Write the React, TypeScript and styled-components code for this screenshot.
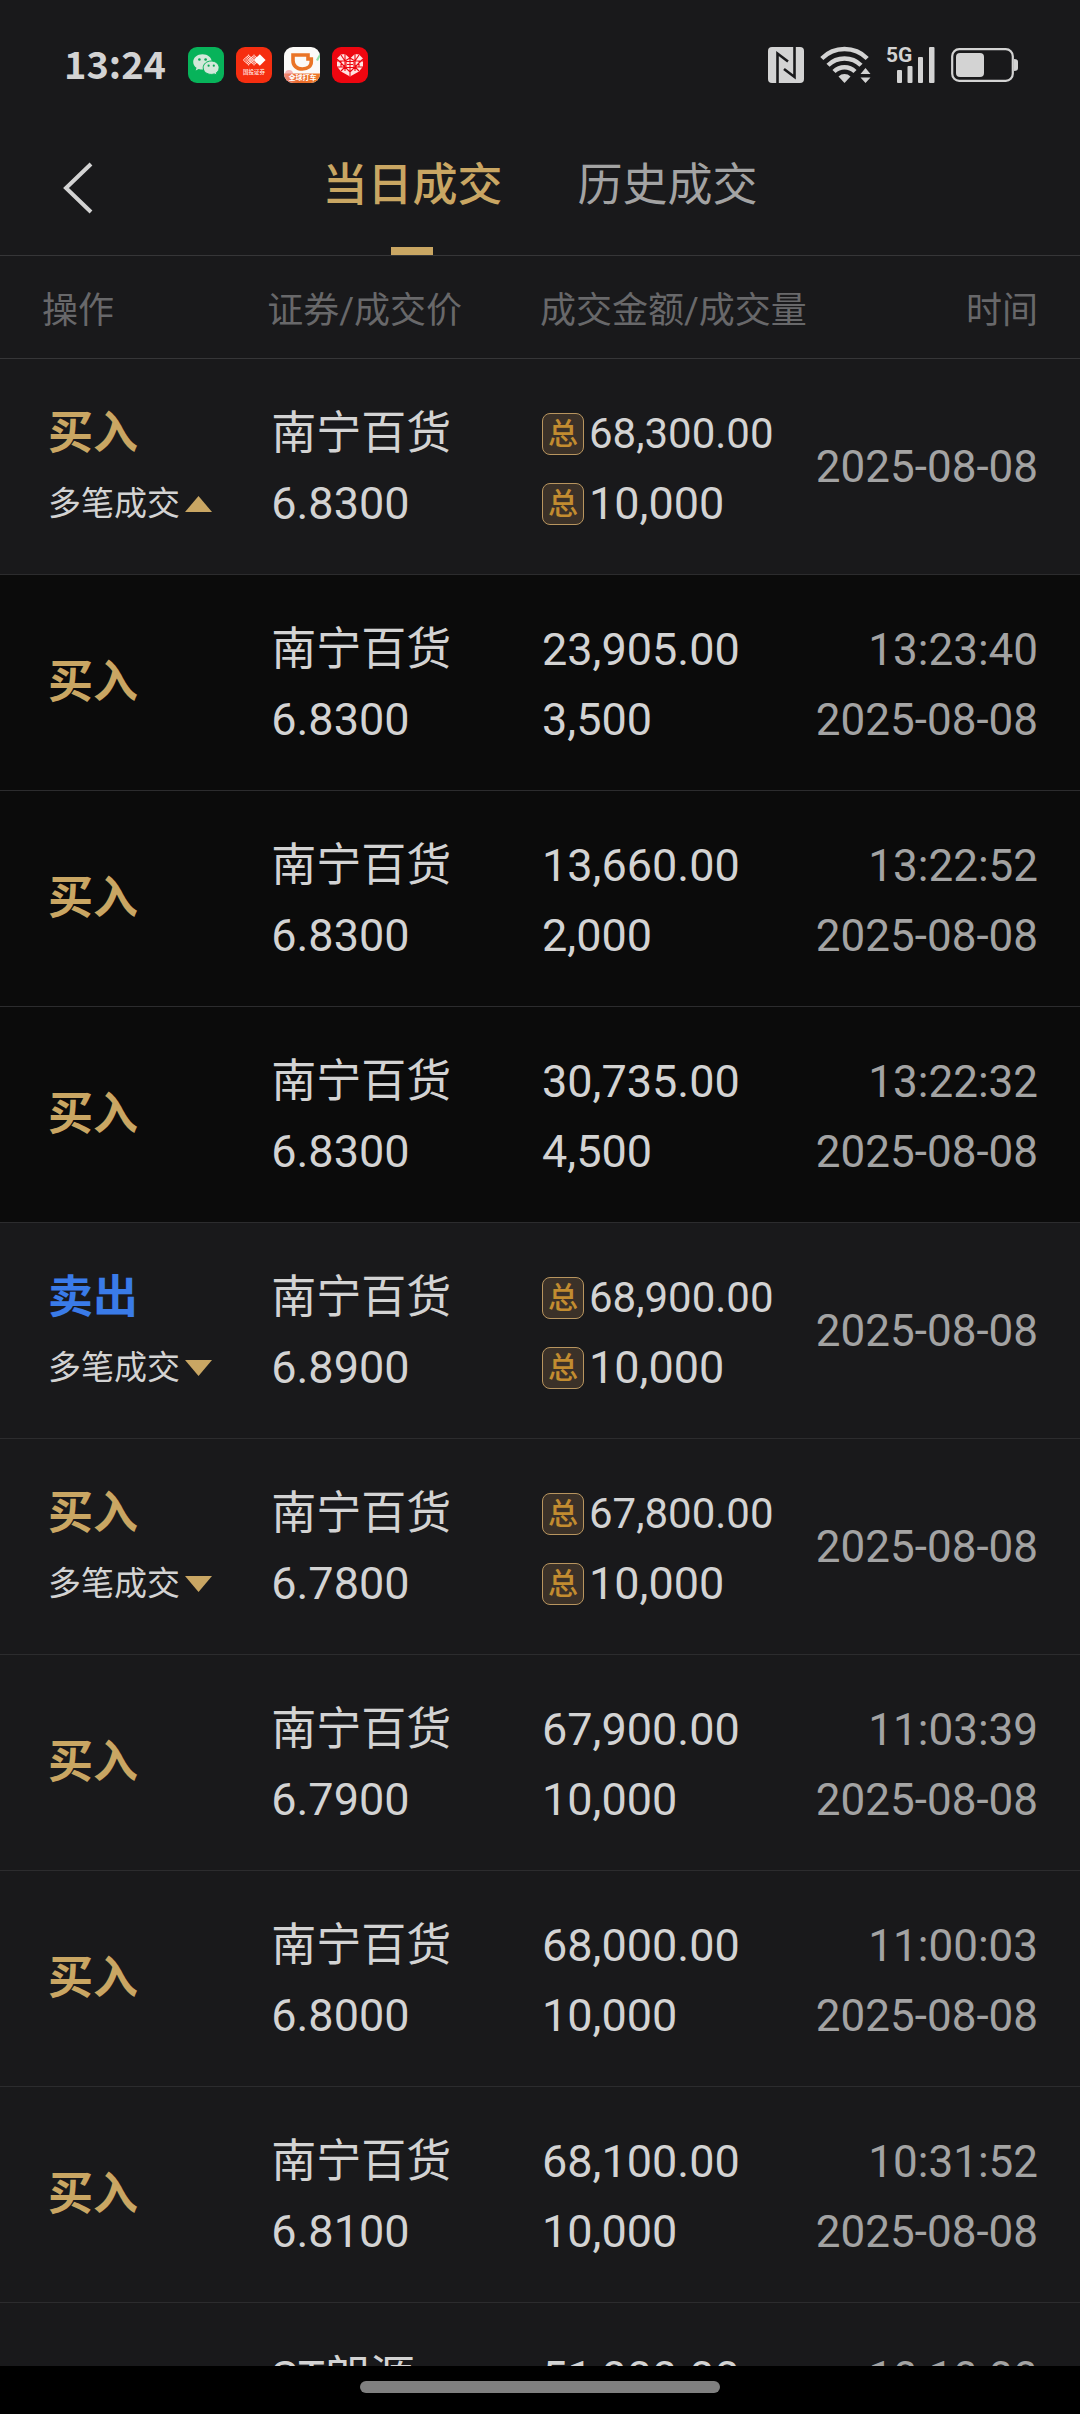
import React, { useState } from "react";
import styled, { createGlobalStyle } from "styled-components";

const color = {
  page: "#19191b",
  nested: "#0b0b0b",
  line: "#363638",
  rowLine: "#2c2c2e",
  text: "#d3d3d3",
  muted: "#a3a3a3",
  faint: "#68686a",
  gold: "#c9a663",
  blue: "#3a7be8",
};

const GlobalStyle = createGlobalStyle`
  *, *::before, *::after { box-sizing: border-box; }
  body {
    margin: 0;
    background: ${color.page};
    color: ${color.text};
    font-family: Roboto, "Noto Sans CJK SC", sans-serif;
  }
  button {
    margin: 0;
    padding: 0;
    border: 0;
    background: none;
    color: inherit;
    font: inherit;
    cursor: pointer;
  }
  svg { overflow: visible; }
`;

const Screen = styled.div`
  display: flex;
  flex-direction: column;
  height: 100vh;
  overflow: hidden;
`;

const StatusBar = styled.div`
  display: flex;
  flex: none;
  align-items: center;
  justify-content: space-between;
  height: 112px;
  padding: 17px 62px 0 64px;
`;

const StatusGroup = styled.div<{ $gap: number }>`
  display: flex;
  align-items: center;
  gap: ${(p) => p.$gap}px;
`;

const Clock = styled.time`
  margin-right: 10px;
  padding-bottom: 4px;
  font: 700 38px/40px "Noto Sans CJK SC", sans-serif;
`;

const Header = styled.header`
  display: grid;
  flex: none;
  grid-template-columns: 1fr auto 1fr;
  height: 144px;
  border-bottom: 1px solid ${color.line};
`;

const BackButton = styled.button`
  display: flex;
  align-items: center;
  justify-self: start;
  padding: 8px 24px 0 62px;
`;

const Tabs = styled.div`
  display: flex;
  gap: 75px;
`;

const Tab = styled.button<{ $active: boolean }>`
  display: flex;
  flex-direction: column;
  align-items: center;
  padding-top: 4px;
  color: ${(p) => (p.$active ? color.gold : color.muted)};
  font-size: 45px;
  font-weight: ${(p) => (p.$active ? 500 : 400)};

  &::after {
    width: 42px;
    height: 8px;
    background: ${(p) => (p.$active ? color.gold : "transparent")};
    content: "";
  }
`;

const TabLabel = styled.span`
  display: flex;
  flex: 1;
  align-items: center;
`;

const List = styled.main`
  flex: 1;
  min-height: 0;
  overflow: hidden;
`;

const Table = styled.table`
  width: 100%;
  border-collapse: separate;
  border-spacing: 0;
  table-layout: fixed;
`;

const HeadCell = styled.th<{ $width: string }>`
  width: ${(p) => p.$width};
  height: 103px;
  padding: 0;
  border-bottom: 1px solid ${color.line};
  color: ${color.faint};
  font-size: 36px;
  font-weight: 400;
  text-align: left;
  white-space: nowrap;

  &:first-child { padding-left: 42px; }
  &:nth-child(2) { padding-left: 8px; }
  &:last-child { padding-right: 42px; text-align: right; }
`;

const Row = styled.tr<{ $nested?: boolean }>`
  background: ${(p) => (p.$nested ? color.nested : color.page)};
`;

const Cell = styled.td`
  height: 216px;
  padding: 0 0 0 2px;
  border-bottom: 1px solid ${color.rowLine};
  font-size: 45px;
  line-height: 70px;
  vertical-align: middle;
  white-space: nowrap;

  &:first-child { padding-left: 48px; }
  &:nth-child(2) { padding-left: 12px; }
  &:last-child {
    padding: 0 42px 0 0;
    color: ${color.muted};
    font-size: 44px;
    text-align: right;
  }
`;

const Stack = styled.div<{ $double: boolean }>`
  padding-top: ${(p) => (p.$double ? 4 : 0)}px;
`;

const Line = styled.div`
  display: flex;
  align-items: center;
  height: 70px;
`;

const EndLine = styled.div`
  height: 70px;
`;

const Side = styled(Line)<{ $sell: boolean }>`
  color: ${(p) => (p.$sell ? color.blue : color.gold)};
  font-weight: 700;
`;

const Toggle = styled.button`
  display: flex;
  align-items: center;
  gap: 5px;
  height: 70px;
  font-size: 33px;
`;

const Badge = styled.span`
  display: inline-flex;
  align-items: center;
  justify-content: center;
  width: 42px;
  height: 42px;
  margin-right: 5px;
  border: 1px solid #b8955f;
  border-radius: 8px;
  background: #3b3128;
  color: #c28c30;
  font-size: 30px;
  font-weight: 500;
  line-height: 40px;
`;

const Total = styled.span<{ $compact?: boolean }>`
  font-size: ${(p) => (p.$compact ? 42 : 45)}px;
`;

const NavBar = styled.footer`
  display: flex;
  flex: none;
  justify-content: center;
  height: 48px;
  padding-top: 15px;
  background: #000;
`;

const NavHandle = styled.div`
  width: calc(100% / 3);
  height: 12px;
  border-radius: 6px;
  background: #808080;
`;

const WeChatIcon = () => (
  <svg width="36" height="36" viewBox="0 0 36 36" role="img" aria-label="WeChat">
    <rect width="36" height="36" rx="9" fill="#07b35a" />
    <path d="M14.5 7.2c-5.200 0-9.300 3.400-9.300 7.700 0 2.400 1.300 4.500 3.300 5.900l-.8 2.700 3-1.500c1.200.4 2.500.6 3.800.6 5.200 0 9.300-3.400 9.300-7.700s-4.100-7.700-9.300-7.700z" fill="#d3e8da" />
    <path d="M23.200 14c-4.500 0-8 3-8 6.700s3.500 6.700 8 6.700c1.100 0 2.200-.2 3.100-.5l2.600 1.400-.7-2.400c1.800-1.200 2.900-3.100 2.900-5.200 0-3.700-3.500-6.700-7.900-6.700z" fill="#d3e8da" stroke="#07b35a" strokeWidth="1" />
    <g fill="#07a653"><circle cx="11.400" cy="12.500" r="1.300" /><circle cx="17.600" cy="12.500" r="1.300" /><circle cx="20.600" cy="18.700" r="1.100" /><circle cx="25.800" cy="18.700" r="1.100" /></g>
  </svg>
);

const dots = Array.from({ length: 25 }, (_, i) => ({ u: i % 5, v: Math.floor(i / 5) }));

const DiamondIcon = () => (
  <svg width="36" height="36" viewBox="0 0 36 36" role="img" aria-label="国投证券">
    <rect width="36" height="36" rx="9" fill="#f62e10" />
    {[12.5, 18].map((cx) => (
      <g key={cx} fill="#ffe0da">
        {dots.map(({ u, v }) => (
          <circle key={`${u}-${v}`} cx={cx + (u - v) * 1.2} cy={13 + (u + v - 4) * 1.2} r=".75" />
        ))}
      </g>
    ))}
    <path d="M23.800 7.200l5.800 5.800-5.800 5.800-5.800-5.800z" fill="#fff" />
    <text x="18" y="26.500" textAnchor="middle" fontSize="5.500" fontWeight="700" fill="#ffd3cb">国投证券</text>
  </svg>
);

const RideIcon = () => (
  <svg width="36" height="36" viewBox="0 0 36 36" role="img" aria-label="全球打车">
    <defs>
      <clipPath id="ride"><rect width="36" height="36" rx="9" /></clipPath>
      <linearGradient id="rideFoot"><stop offset="0" stopColor="#f28a7a" /><stop offset=".4" stopColor="#ea6a2c" /><stop offset="1" stopColor="#ef7a28" /></linearGradient>
    </defs>
    <g clipPath="url(#ride)">
      <rect width="36" height="36" fill="#fbfaf8" />
      <path d="M32 13l4-7v4l-2 4z" fill="#8fe0a8" />
      <circle cx="5" cy="27" r="4" fill="#f5b5b5" />
      <path d="M0 26.500h36V36H0z" fill="url(#rideFoot)" />
    </g>
    <path d="M9 8h15v4h3.300v2.500c0 4.500-3.300 7.500-9 7.500S9 18.500 9 13.500z" fill="none" stroke="#ea7426" strokeWidth="3.600" />
    <text x="18.500" y="32.800" textAnchor="middle" fontSize="7" fontWeight="700" fill="#fff">全球打车</text>
  </svg>
);

const HeartIcon = () => (
  <svg width="36" height="36" viewBox="0 0 36 36" role="img" aria-label="拼多多">
    <rect width="36" height="36" rx="9" fill="#ee0610" />
    <path d="M9 7.500l4-.5 5 4.500 5-4.500 4 .5 4 4v8l-4 5-9 5-9-5-4-5v-8z" fill="#ffe4e2" />
    <g fill="none" stroke="#ee0610" strokeWidth="1.100">
      <path d="M5 14h8l5-3 5 3h8M5 20h8l5 5 5-5h8M13 7v17M23 7v17M18 11v4M18 21v8M5 12l8 8M31 12l-8 8M9 8l4 6M27 8l-4 6M9 24l4-4M27 24l-4-4M9 14v6M27 14v6" />
      <path d="M14 14.500h8v6h-8zM18 15v6M15 17.500h6" />
    </g>
  </svg>
);

const NfcIcon = () => (
  <svg width="36" height="36" viewBox="0 0 36 36" role="img" aria-label="NFC">
    <rect width="36" height="36" rx="4" fill={color.text} />
    <path d="M9.500 36V6.500L20 14.500M26.500 0v30L16 22" fill="none" stroke={color.page} strokeWidth="2.600" />
  </svg>
);

const WifiIcon = () => (
  <svg width="51" height="36" viewBox="0 0 51 36" role="img" aria-label="Wi-Fi">
    <g fill="none" stroke={color.text} strokeWidth="4.400">
      <path d="M1.800 11.500a32 32 0 0 1 45.400 0" />
      <path d="M8 18.200a23.500 23.500 0 0 1 33 0" />
      <path d="M14 24.500a15 15 0 0 1 21 0" />
    </g>
    <path d="M18.500 29.500a8.500 8.500 0 0 1 12 0l-6 6.500z" fill={color.text} />
    <path d="M40.500 27l5-6 5 6zM40.500 30.500l5 5.500 5-5.500z" fill={color.text} />
  </svg>
);

const SignalIcon = () => (
  <svg width="48" height="38" viewBox="0 0 48 38" role="img" aria-label="5G">
    <g fill={color.text}>
      <rect x="10" y="24" width="5" height="13" rx="1" />
      <rect x="20.500" y="20" width="5" height="17" rx="1" />
      <rect x="31" y="11" width="5" height="26" rx="1" />
      <rect x="42" y="1" width="5.500" height="36" rx="1" />
      <text x="-1" y="16" fontSize="21" fontWeight="700">5G</text>
    </g>
  </svg>
);

const BatteryIcon = () => (
  <svg width="67" height="34" viewBox="0 0 67 34" role="img" aria-label="电量">
    <rect x="1.200" y="1.200" width="60.600" height="31.600" rx="7" fill="none" stroke={color.text} strokeWidth="2.200" />
    <rect x="5" y="5" width="28" height="24" rx="4" fill={color.text} />
    <path d="M63 11c3 0 4 1 4 3v6c0 2-1 3-4 3z" fill={color.text} />
  </svg>
);

const Caret = ({ open }: { open: boolean }) => (
  <svg width="27" height="16" viewBox="0 0 27 16" aria-hidden="true">
    <path d={open ? "M13.500 0L27 16H0z" : "M0 0h27L13.500 16z"} fill={color.gold} />
  </svg>
);

type Trade = {
  side: "买入" | "卖出";
  name: string;
  price: string;
  amount: string;
  volume: string;
  time?: string;
  parts?: Trade[];
};

const DATE = "2025-08-08";

const trades: Trade[] = [
  {
    side: "买入", name: "南宁百货", price: "6.8300", amount: "68,300.00", volume: "10,000",
    parts: [
      { side: "买入", name: "南宁百货", price: "6.8300", amount: "23,905.00", volume: "3,500", time: "13:23:40" },
      { side: "买入", name: "南宁百货", price: "6.8300", amount: "13,660.00", volume: "2,000", time: "13:22:52" },
      { side: "买入", name: "南宁百货", price: "6.8300", amount: "30,735.00", volume: "4,500", time: "13:22:32" },
    ],
  },
  { side: "卖出", name: "南宁百货", price: "6.8900", amount: "68,900.00", volume: "10,000", parts: [] },
  { side: "买入", name: "南宁百货", price: "6.7800", amount: "67,800.00", volume: "10,000", parts: [] },
  { side: "买入", name: "南宁百货", price: "6.7900", amount: "67,900.00", volume: "10,000", time: "11:03:39" },
  { side: "买入", name: "南宁百货", price: "6.8000", amount: "68,000.00", volume: "10,000", time: "11:00:03" },
  { side: "买入", name: "南宁百货", price: "6.8100", amount: "68,100.00", volume: "10,000", time: "10:31:52" },
  { side: "买入", name: "ST朗源", price: "5.1000", amount: "51,000.00", volume: "10,000", time: "10:10:00" },
];

type RowProps = { trade: Trade; nested?: boolean; open?: boolean; onToggle?: () => void };

const TradeRow = ({ trade, nested, open = false, onToggle }: RowProps) => {
  const grouped = Boolean(trade.parts);
  return (
    <Row $nested={nested}>
      <Cell>
        <Stack $double={grouped}>
          <Side $sell={trade.side === "卖出"}>{trade.side}</Side>
          {grouped && (
            <Toggle type="button" aria-expanded={open} onClick={onToggle}>
              多笔成交
              <Caret open={open} />
            </Toggle>
          )}
        </Stack>
      </Cell>
      <Cell>
        <Stack $double>
          <Line>{trade.name}</Line>
          <Line>{trade.price}</Line>
        </Stack>
      </Cell>
      <Cell>
        <Stack $double>
          <Line>
            {grouped && <Badge>总</Badge>}
            <Total $compact={grouped}>{trade.amount}</Total>
          </Line>
          <Line>
            {grouped && <Badge>总</Badge>}
            <Total>{trade.volume}</Total>
          </Line>
        </Stack>
      </Cell>
      <Cell>
        <Stack $double={Boolean(trade.time)}>
          {trade.time && <EndLine>{trade.time}</EndLine>}
          <EndLine>{DATE}</EndLine>
        </Stack>
      </Cell>
    </Row>
  );
};

const columns = [
  { label: "操作", width: "24%" },
  { label: "证券/成交价", width: "26%" },
  { label: "成交金额/成交量", width: "25%" },
  { label: "时间", width: "25%" },
];

export default function App() {
  const [tab, setTab] = useState("当日成交");
  const [openIndex, setOpenIndex] = useState<number | null>(0);

  return (
    <Screen>
      <GlobalStyle />
      <StatusBar>
        <StatusGroup $gap={12}>
          <Clock>13:24</Clock>
          <WeChatIcon />
          <DiamondIcon />
          <RideIcon />
          <HeartIcon />
        </StatusGroup>
        <StatusGroup $gap={16}>
          <NfcIcon />
          <WifiIcon />
          <SignalIcon />
          <BatteryIcon />
        </StatusGroup>
      </StatusBar>
      <Header>
        <BackButton type="button" aria-label="返回">
          <svg width="31" height="52" viewBox="0 0 31 52" aria-hidden="true">
            <path d="M29 2L4 26l25 24" fill="none" stroke={color.text} strokeWidth="4" />
          </svg>
        </BackButton>
        <Tabs role="tablist">
          {["当日成交", "历史成交"].map((label) => (
            <Tab
              key={label}
              type="button"
              role="tab"
              aria-selected={tab === label}
              $active={tab === label}
              onClick={() => setTab(label)}
            >
              <TabLabel>{label}</TabLabel>
            </Tab>
          ))}
        </Tabs>
      </Header>
      <List>
        <Table>
          <thead>
            <tr>
              {columns.map(({ label, width }) => (
                <HeadCell key={label} scope="col" $width={width}>{label}</HeadCell>
              ))}
            </tr>
          </thead>
          <tbody>
            {trades.map((trade, i) => (
              <React.Fragment key={i}>
                <TradeRow
                  trade={trade}
                  open={openIndex === i}
                  onToggle={() => setOpenIndex(openIndex === i ? null : i)}
                />
                {openIndex === i &&
                  trade.parts?.map((part, j) => <TradeRow key={j} trade={part} nested />)}
              </React.Fragment>
            ))}
          </tbody>
        </Table>
      </List>
      <NavBar>
        <NavHandle />
      </NavBar>
    </Screen>
  );
}
